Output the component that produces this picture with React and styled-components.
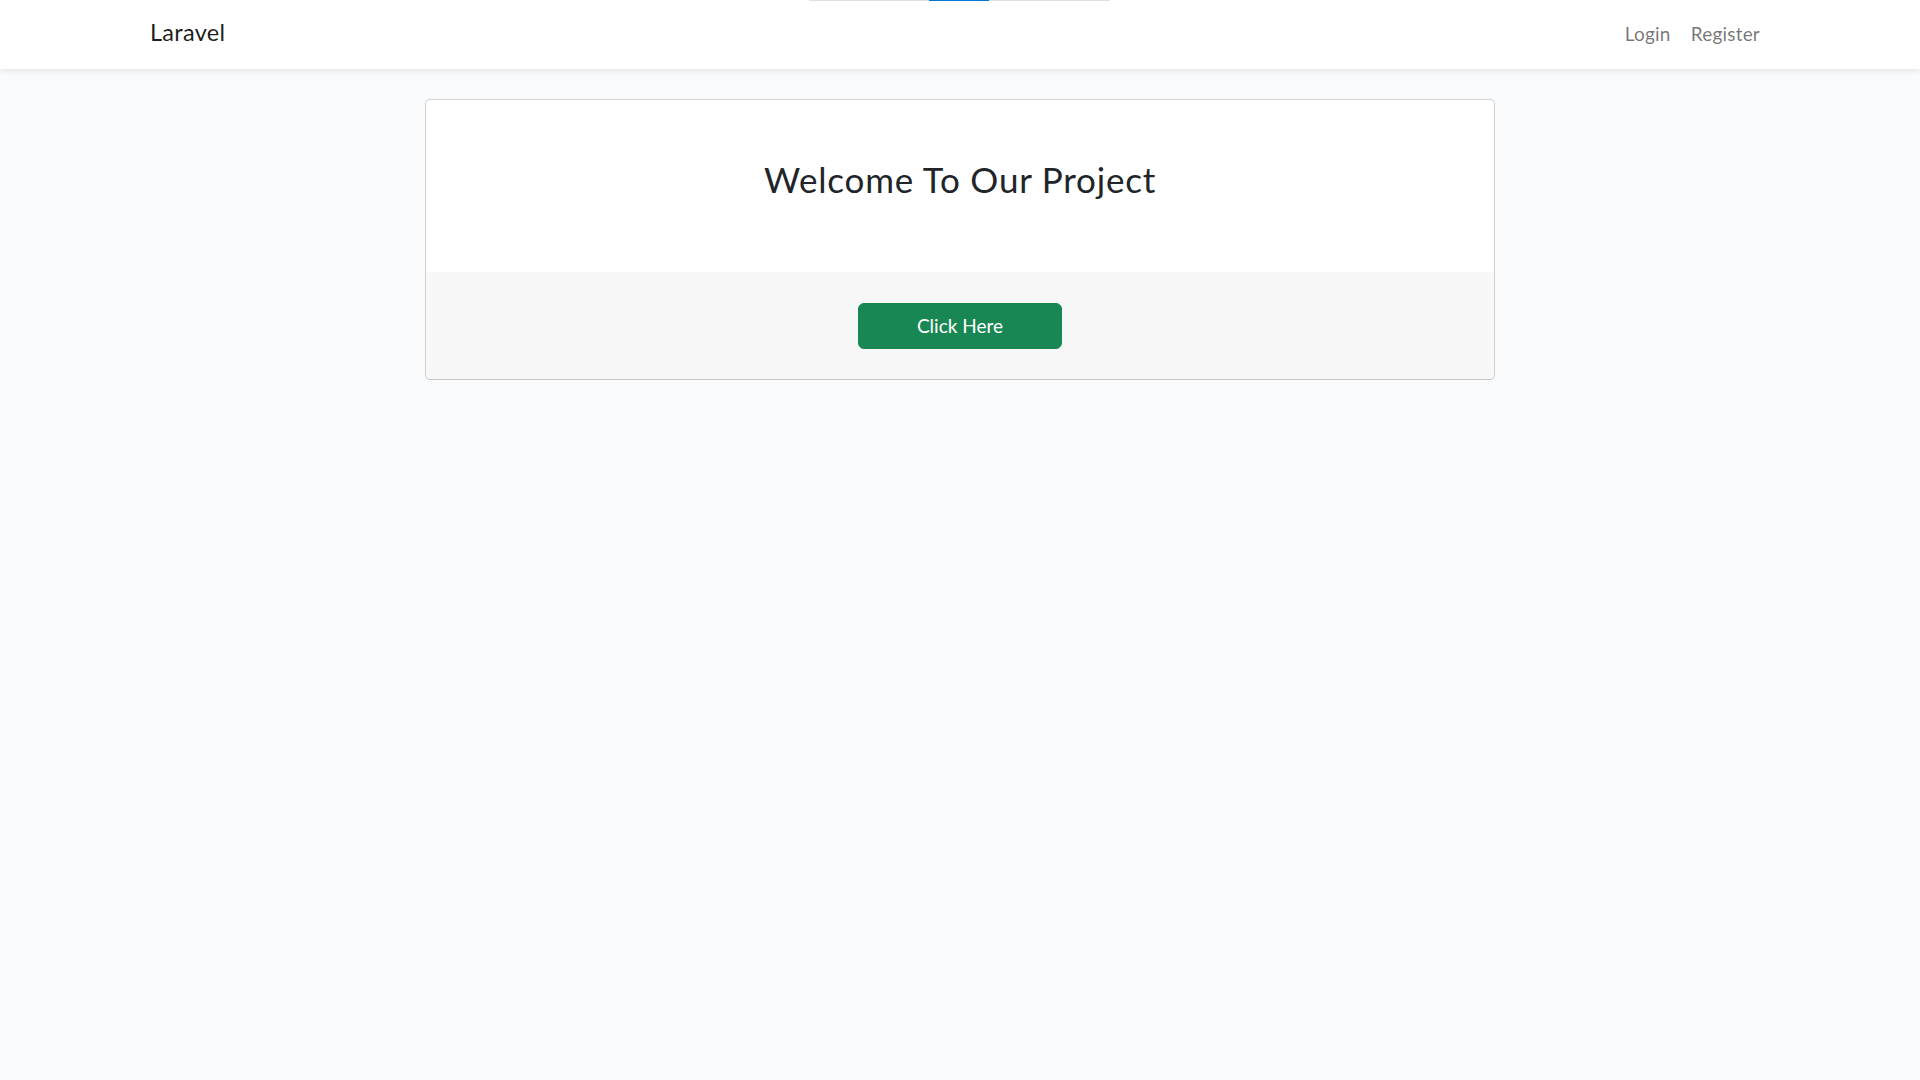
import styled, { createGlobalStyle } from "styled-components";

const GlobalStyle = createGlobalStyle`
  html, body {
    margin: 0;
    padding: 0;
  }
  body {
    background: #f8fafc;
    font-family: Lato, "Noto Sans", sans-serif;
    font-size: 20px;
    line-height: 1.5;
    color: #212529;
    min-height: 1080px;
  }
`;

// thin page-load indicator sitting over the navbar
const LoadBar = styled.div`
  position: absolute;
  top: 0;
  left: 809px;
  width: 301px;
  height: 1px;
  background: #e1e1e1;
  z-index: 10;
`;

const LoadFill = styled.div`
  margin-left: 120px;
  width: 60px;
  height: 100%;
  background: #0078d4;
`;

const Navbar = styled.nav`
  position: relative;
  background: #fff;
  height: 69px;
  box-shadow: 0 2.5px 5px rgba(0, 0, 0, 0.075);
`;

const Container = styled.div`
  width: 1650px;
  margin: 0 auto;
  padding: 0 15px;
  box-sizing: border-box;
  height: 100%;
  display: flex;
  align-items: center;
  justify-content: space-between;
`;

const Brand = styled.a`
  font-size: 23.5px;
  color: rgba(0, 0, 0, 0.9);
  text-decoration: none;
  letter-spacing: 0.3px;
  padding-bottom: 4px;
`;

const NavLinks = styled.div`
  display: flex;
`;

const NavLink = styled.a`
  padding: 0 10px;
  font-size: 19px;
  color: rgba(0, 0, 0, 0.55);
  text-decoration: none;
  letter-spacing: 0.2px;
`;

const Main = styled.main`
  padding: 30px 0;
  display: flex;
  justify-content: center;
`;

const Card = styled.div`
  width: 1070px;
  box-sizing: border-box;
  background: #fff;
  border: 1px solid rgba(0, 0, 0, 0.175);
  border-bottom-color: rgba(0, 0, 0, 0.22);
  border-radius: 5px;
  overflow: hidden;
`;

const CardBody = styled.div`
  height: 172px;
  box-sizing: border-box;
  padding: 58px 20px 0;
  text-align: center;
`;

const Title = styled.h1`
  margin: 0;
  font-size: 35px;
  font-weight: 400;
  line-height: 42px;
  letter-spacing: 0.8px;
  color: #212529;
`;

const CardFooter = styled.div`
  height: 107px;
  box-sizing: border-box;
  background: rgba(0, 0, 0, 0.03);
  display: flex;
  justify-content: center;
  padding-top: 31px;
`;

const Button = styled.button`
  height: 46px;
  width: 204px;
  border: 1px solid #198754;
  border-radius: 6px;
  background: #198754;
  color: #fff;
  font-family: inherit;
  font-size: 19px;
  line-height: 1.5;
  cursor: pointer;
`;

export default function App() {
  return (
    <>
      <GlobalStyle />
      <LoadBar>
        <LoadFill />
      </LoadBar>
      <Navbar>
        <Container>
          <Brand href="#">Laravel</Brand>
          <NavLinks>
            <NavLink href="#">Login</NavLink>
            <NavLink href="#">Register</NavLink>
          </NavLinks>
        </Container>
      </Navbar>
      <Main>
        <Card>
          <CardBody>
            <Title>Welcome To Our Project</Title>
          </CardBody>
          <CardFooter>
            <Button>Click Here</Button>
          </CardFooter>
        </Card>
      </Main>
    </>
  );
}
